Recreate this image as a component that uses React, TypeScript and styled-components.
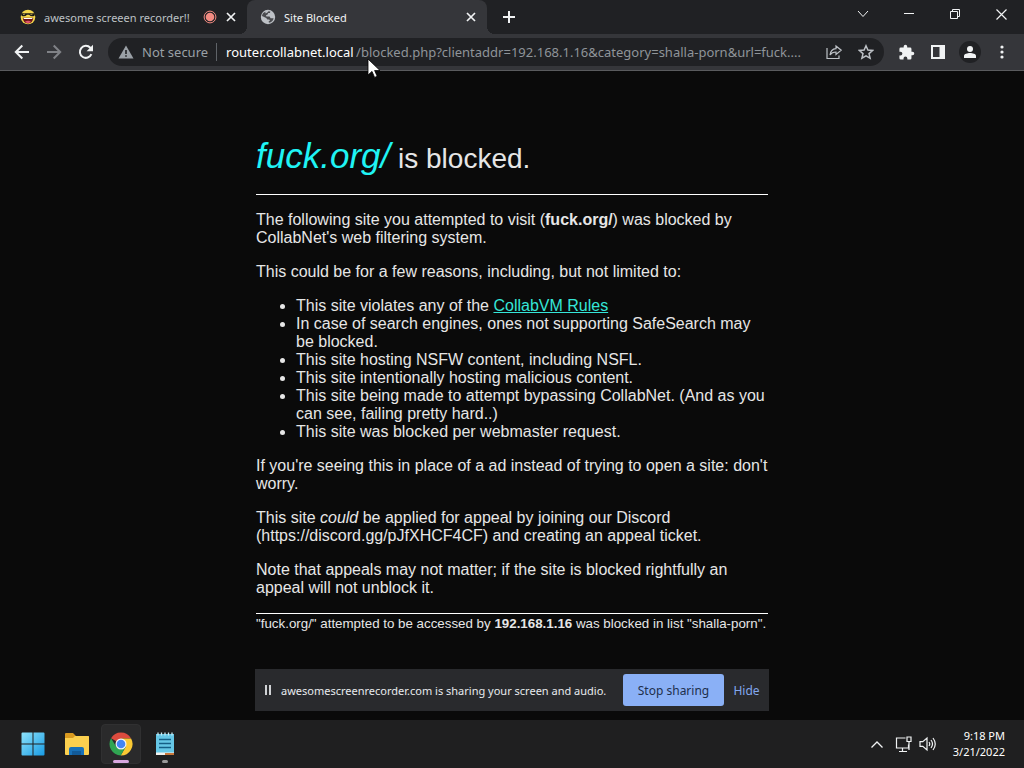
import React from "react";
import styled, { createGlobalStyle } from "styled-components";

const uiFont = `"Noto Sans", "Open Sans", sans-serif`;

const GlobalStyle = createGlobalStyle`
  *, *::before, *::after { box-sizing: border-box; }
  body { margin: 0; background: #0a0a0a; }
  button, input { font: inherit; color: inherit; }
  svg { display: block; flex: none; }
`;

const Desktop = styled.div`
  position: relative;
  display: flex;
  flex-direction: column;
  min-height: 100vh;
  font-family: ${uiFont};
  font-size: 12px;
  color: #e8eaed;
`;

/* Browser frame */
const TabStrip = styled.header`
  display: flex;
  height: 34px;
  background: #202124;
`;

const TabList = styled.div`
  display: flex;
  padding-left: 7px;
`;

const Tab = styled.div<{ $active?: boolean }>`
  position: relative;
  display: flex;
  align-items: center;
  gap: 6px;
  width: 240px;
  padding: 0 8px 0 13px;
  border-radius: 8px 8px 0 0;
  background: ${(p) => (p.$active ? "#35363a" : "transparent")};
  color: ${(p) => (p.$active ? "#f1f3f4" : "#bdc1c6")};

  &::before,
  &::after {
    content: ${(p) => (p.$active ? '""' : "none")};
    position: absolute;
    bottom: 0;
    width: 8px;
    height: 8px;
  }
  &::before {
    right: 100%;
    background: radial-gradient(circle at 0 0, transparent 8px, #35363a 8px);
  }
  &::after {
    left: 100%;
    background: radial-gradient(circle at 100% 0, transparent 8px, #35363a 8px);
  }
`;

const TabButton = styled.button`
  display: flex;
  flex: 1;
  align-items: center;
  gap: 8px;
  min-width: 0;
  height: 34px;
  padding: 0;
  border: 0;
  background: none;
  text-align: left;
  white-space: nowrap;
`;

const TabTitle = styled.span`
  flex: 1;
  overflow: hidden;
`;

const LongTabTitle = styled(TabTitle)`
  font-size: 11px;
`;

const IconButton = styled.button<{ $w?: number; $color?: string }>`
  display: flex;
  flex: none;
  align-items: center;
  justify-content: center;
  width: ${(p) => p.$w ?? 32}px;
  height: 28px;
  padding: 0;
  border: 0;
  background: none;
  color: ${(p) => p.$color ?? "#f1f3f4"};
`;

const NewTab = styled(IconButton)`
  margin: 3px 0 0 6px;
`;

const WindowControls = styled.div`
  display: flex;
  margin-left: auto;
`;

const Toolbar = styled.nav`
  display: flex;
  align-items: center;
  height: 37px;
  padding: 0 6px;
  background: #35363a;
  border-bottom: 1px solid #5a5b5e;
`;

const AddressBar = styled.form`
  display: flex;
  flex: 1;
  align-items: center;
  min-width: 0;
  height: 28px;
  margin: 0 6px;
  padding: 0 2px 0 10px;
  border-radius: 14px;
  background: #202124;
  font-size: 13px;
`;

const Security = styled.button`
  display: flex;
  align-items: center;
  gap: 8px;
  height: 18px;
  padding: 0 8px 0 0;
  border: 0;
  border-right: 1px solid #5f6368;
  background: none;
  color: #9aa0a6;
  white-space: nowrap;
`;

const UrlInput = styled.input<{ $host?: boolean }>`
  flex: ${(p) => (p.$host ? "0 0 130px" : "1")};
  min-width: 0;
  width: 130px;
  height: 24px;
  margin-left: ${(p) => (p.$host ? 9 : 0)}px;
  padding: 0;
  border: 0;
  outline: 0;
  background: none;
  color: ${(p) => (p.$host ? "#ffffff" : "#8f9499")};
`;

const Avatar = styled.span`
  display: flex;
  align-items: center;
  justify-content: center;
  width: 22px;
  height: 22px;
  border-radius: 50%;
  background: #202124;
`;

/* Blocked page */
const Page = styled.main`
  flex: 1;
  width: 50%;
  margin: 0 auto;
  padding: 64px 0 80px;
  font-family: "Liberation Sans", Arial, sans-serif;
  font-size: 16px;
  line-height: 18px;
  color: #e6e6e6;
`;

const Title = styled.h1`
  margin: 0 0 15px;
  font-size: 28px;
  font-weight: 400;
  line-height: 41px;
`;

const BlockedSite = styled.em`
  font-size: 35px;
  color: #1ff4f4;
`;

const Rule = styled.hr`
  height: 1px;
  margin: 0;
  border: 0;
  background: #ffffff;
`;

const Paragraph = styled.p`
  margin: 16px 0;
`;

const Reasons = styled.ul`
  margin: 16px 0;
  padding-left: 40px;
`;

const RulesLink = styled.a`
  color: #35e6d8;
`;

const Footnote = styled.small`
  display: block;
  padding-top: 1px;
  font-size: smaller;
  white-space: nowrap;
`;

/* Screen sharing notice floats over the page */
const ShareBar = styled.aside`
  position: absolute;
  bottom: 57px;
  left: 50%;
  display: flex;
  align-items: center;
  width: 514px;
  height: 42px;
  padding: 0 0 0 9px;
  transform: translateX(-50%);
  background: #292a2d;
  white-space: nowrap;
`;

const ShareText = styled.span`
  flex: 1;
  margin-left: 8px;
  font-size: 11px;
`;

const StopButton = styled.button`
  flex: none;
  width: 101px;
  height: 32px;
  padding: 0;
  border: 0;
  border-radius: 3px;
  background: #8ab0f6;
  color: #202f4c;
`;

const HideButton = styled.button`
  flex: none;
  width: 45px;
  height: 32px;
  padding: 0;
  border: 0;
  background: none;
  color: #82a8ee;
`;

/* Taskbar */
const Taskbar = styled.footer`
  display: flex;
  align-items: center;
  height: 48px;
  padding: 0 19px 0 13px;
  background: #1f1f20;
`;

const TaskButton = styled.button<{ $active?: boolean }>`
  position: relative;
  display: flex;
  align-items: center;
  justify-content: center;
  width: 40px;
  height: 40px;
  margin-right: 4px;
  padding: 0;
  border: 1px solid ${(p) => (p.$active ? "#303031" : "transparent")};
  border-radius: 4px;
  background: ${(p) => (p.$active ? "#2a2a2b" : "none")};
`;

const Indicator = styled.span<{ $active?: boolean }>`
  position: absolute;
  bottom: 0;
  left: 50%;
  width: ${(p) => (p.$active ? 16 : 6)}px;
  height: 3px;
  border-radius: 2px;
  transform: translateX(-50%);
  background: ${(p) => (p.$active ? "#d9a8e0" : "#9a9a9a")};
`;

const Tray = styled.div`
  display: flex;
  align-items: center;
  margin-left: auto;
`;

const Clock = styled.time`
  width: 66px;
  font-size: 11px;
  line-height: 16px;
  text-align: right;
  color: #ffffff;
`;

const Pointer = styled.svg`
  position: absolute;
  top: 58px;
  left: 367px;
`;

const CloseIcon = () => (
  <svg width="10" height="10" viewBox="0 0 10 10" stroke="currentColor" strokeWidth="1.7">
    <path d="M1 1l8 8M9 1L1 9" />
  </svg>
);

const FaceIcon = () => (
  <svg width="16" height="16" viewBox="0 0 16 16">
    <circle cx="8" cy="8" r="7.3" fill="#f3d64c" />
    <path d="M.8 4.2h14.4l-.7 2.600q-3.3 1.500-5.4-1H7Q4.8 8.200 1.500 6.800z" fill="#1c1a18" />
    <path d="M3 5.500l2-.4M10.500 5.500l2-.4" stroke="#d8c25a" strokeWidth=".8" />
    <path d="M2.700 8.800h10.600q-.6 5.700-5.300 5.700T2.700 8.800z" fill="#6c1518" />
    <path d="M3.500 8.900h9l-.3 1H3.800z" fill="#fff" />
    <path d="M5 12.600q3-1.800 6 0-1.300 1.600-3 1.600t-3-1.600z" fill="#e0526b" />
  </svg>
);

const RecordingIcon = () => (
  <svg width="14" height="14" viewBox="0 0 14 14">
    <circle cx="7" cy="7" r="4.300" fill="#f28b82" />
    <circle cx="7" cy="7" r="5.900" fill="none" stroke="#f28b82" />
  </svg>
);

const GlobeIcon = () => (
  <svg width="16" height="16" viewBox="0 0 16 16">
    <circle cx="8" cy="8" r="7.200" fill="#bdc1c6" />
    <path d="M8.500 2.200L10.300 2.600 10 4H8.200L7.600 5.600 6 6.200 6.400 7.600H9.600L10.600 9.200H13.600C13.200 11.500 11.500 13.400 9 13.800L8.600 12.600 10 11.400 9.200 10.400H7.400L6.200 9 2 7C2.300 5 3.500 3.300 5.300 2.700L5.600 4.400 7.400 3.600z" fill="#4a4b4f" />
  </svg>
);

const BackIcon = () => (
  <svg width="16" height="16" viewBox="0 0 16 16" fill="none" stroke="currentColor" strokeWidth="2">
    <path d="M15 8H2M8.300 1.500L1.800 8l6.500 6.500" />
  </svg>
);

const ForwardIcon = () => (
  <svg width="16" height="16" viewBox="0 0 16 16" fill="none" stroke="currentColor" strokeWidth="2">
    <path d="M1 8h13M7.700 1.500L14.200 8l-6.500 6.500" />
  </svg>
);

const ReloadIcon = () => (
  <svg width="16" height="16" viewBox="0 0 16 16">
    <path d="M13.400 10.200A6 6 0 1 1 12.300 3.800L14 5.500" fill="none" stroke="currentColor" strokeWidth="2" />
    <path d="M15 .8v6.400H8.600z" fill="currentColor" />
  </svg>
);

const WarningIcon = () => (
  <svg width="16" height="16" viewBox="0 0 16 16">
    <path d="M8 1.500L15.500 14.500H.5z" fill="currentColor" />
    <path d="M7.200 6h1.600v4H7.200zM7.200 11.200h1.600v1.600H7.200z" fill="#202124" />
  </svg>
);

const ShareIcon = () => (
  <svg width="16" height="16" viewBox="0 0 16 16" fill="none" stroke="currentColor" strokeWidth="1.200">
    <path d="M1 4v10.500h12V11.500" />
    <path d="M10 2l5.200 4.200L10 10.400V8C7.300 8 5.300 9 4 11 4.400 7.500 6.500 4.900 10 4.600z" />
  </svg>
);

const StarIcon = () => (
  <svg width="16" height="16" viewBox="0 0 16 16" fill="none" stroke="currentColor" strokeWidth="1.500">
    <path d="M8 1.800l1.900 4.300 4.700.4-3.600 3.100 1.100 4.600L8 11.800l-4.100 2.400L5 9.600 1.400 6.500l4.700-.4z" />
  </svg>
);

const PuzzleIcon = () => (
  <svg width="17" height="17" viewBox="0 0 24 24" fill="currentColor">
    <path d="M20.500 11H19V7a2 2 0 0 0-2-2h-4V3.500a2.500 2.500 0 0 0-5 0V5H4a2 2 0 0 0-2 2v3.800h1.500a2.700 2.700 0 0 1 0 5.400H2V20a2 2 0 0 0 2 2h3.800v-1.500a2.700 2.700 0 0 1 5.400 0V22H17a2 2 0 0 0 2-2v-4h1.500a2.500 2.500 0 0 0 0-5z" />
  </svg>
);

const PanelIcon = () => (
  <svg width="14" height="14" viewBox="0 0 14 14">
    <path d="M1 1h12v12H1z" fill="none" stroke="currentColor" strokeWidth="2" />
    <path d="M8.500 0H14v14H8.500z" fill="currentColor" />
  </svg>
);

const PersonIcon = () => (
  <svg width="12" height="12" viewBox="0 0 12 12" fill="currentColor">
    <circle cx="6" cy="3" r="3" />
    <path d="M0 12V9.800C0 7.900 3.500 7 6 7s6 .9 6 2.800V12z" />
  </svg>
);

const DotsIcon = () => (
  <svg width="4" height="14" viewBox="0 0 4 14" fill="currentColor">
    <circle cx="2" cy="2" r="1.600" />
    <circle cx="2" cy="7" r="1.600" />
    <circle cx="2" cy="12" r="1.600" />
  </svg>
);

const WindowsIcon = () => (
  <svg width="24" height="24" viewBox="0 0 24 24">
    <defs>
      <linearGradient id="win" x1="0" y1="0" x2="1" y2="1">
        <stop offset="0" stopColor="#8ee3fb" />
        <stop offset="1" stopColor="#189be4" />
      </linearGradient>
    </defs>
    <path d="M1.500.5h10v11H.5v-10a1 1 0 0 1 1-1zM12.500.5h10a1 1 0 0 1 1 1v10h-11zM.5 12.500h11v11h-10a1 1 0 0 1-1-1zM12.500 12.500h11v10a1 1 0 0 1-1 1h-10z" fill="url(#win)" />
  </svg>
);

const FolderIcon = () => (
  <svg width="26" height="24" viewBox="0 0 26 24">
    <path d="M1 2q0-1 1-1h7l3 3h12q1 0 1 1v6H1z" fill="#d99a20" />
    <path d="M1 6h8l2-2h13q1 0 1 1v17q0 1-1 1H2q-1 0-1-1z" fill="#fbd04f" />
    <path d="M5 23v-6q0-2 2-2h11q2 0 2 2v6z" fill="#1871b8" />
    <path d="M8 19h9v4H8z" fill="#125a98" />
  </svg>
);

const ChromeIcon = () => (
  <svg width="24" height="24" viewBox="0 0 24 24">
    <path d="M12 12L2.040 6.250A11.500 11.500 0 0 1 21.960 6.250L12 6.500z" fill="#dc4b3e" />
    <path d="M12 6.500h10.100A11.500 11.500 0 0 1 11.700 23.500L16.760 14.750z" fill="#fbc933" />
    <path d="M2.040 6.250L7.240 14.750 12 17.500l4.760-2.750L11.700 23.500A11.500 11.500 0 0 1 2.040 6.250z" fill="#30a552" />
    <circle cx="12" cy="12" r="5.500" fill="#f4f5f6" />
    <circle cx="12" cy="12" r="4.300" fill="#4285f4" />
  </svg>
);

const NotepadIcon = () => (
  <svg width="20" height="24" viewBox="0 0 20 24">
    <path d="M1 2h18v19H1z" fill="#66c7e6" />
    <path d="M1 20.500h18v2.500H1z" fill="#f2f2ee" />
    <path d="M10 21h9v2h-9z" fill="#c9763a" />
    <path d="M3 .5v3M6.500.5v3M10 .5v3M13.500.5v3M17 .5v3" stroke="#c9edf6" strokeWidth="1.300" />
    <path d="M4 7.500h12M4 11.500h12M4 15.500h12" stroke="#155f86" strokeWidth="1.700" />
  </svg>
);

const NetworkIcon = () => (
  <svg width="17" height="17" viewBox="0 0 17 17" fill="none" stroke="currentColor" strokeWidth="1.200">
    <path d="M10.500 2H1.500v10h12V8.500M7.500 12v3.500M4 15.500h8M12 1h4v4.500h-4zM14 5.500V14" />
  </svg>
);

const VolumeIcon = () => (
  <svg width="17" height="16" viewBox="0 0 17 16" fill="none" stroke="currentColor" strokeWidth="1.200">
    <path d="M1 5.700h2.800L8 2v12l-4.200-3.700H1zM10 6q1.500 2 0 4M12 4q3 4 0 8M14 2q4.500 6 0 12" />
  </svg>
);

const reasons: React.ReactNode[] = [
  <>This site violates any of the <RulesLink href="#rules">CollabVM Rules</RulesLink></>,
  "In case of search engines, ones not supporting SafeSearch may be blocked.",
  "This site hosting NSFW content, including NSFL.",
  "This site intentionally hosting malicious content.",
  "This site being made to attempt bypassing CollabNet. (And as you can see, failing pretty hard..)",
  "This site was blocked per webmaster request.",
];

export default function App() {
  return (
    <Desktop>
      <GlobalStyle />
      <TabStrip>
        <TabList role="tablist">
          <Tab>
            <TabButton role="tab" aria-selected={false}>
              <FaceIcon />
              <LongTabTitle>awesome screeen recorder!!</LongTabTitle>
              <RecordingIcon />
            </TabButton>
            <IconButton $w={16} aria-label="Close tab"><CloseIcon /></IconButton>
          </Tab>
          <Tab $active>
            <TabButton role="tab" aria-selected>
              <GlobeIcon />
              <LongTabTitle>Site Blocked</LongTabTitle>
            </TabButton>
            <IconButton $w={16} aria-label="Close tab"><CloseIcon /></IconButton>
          </Tab>
        </TabList>
        <NewTab aria-label="New tab">
          <svg width="12" height="12" viewBox="0 0 12 12" stroke="currentColor" strokeWidth="2"><path d="M6 0v12M0 6h12" /></svg>
        </NewTab>
        <WindowControls>
          <IconButton $w={46} aria-label="Search tabs">
            <svg width="12" height="8" viewBox="0 0 12 8" fill="none" stroke="currentColor"><path d="M1 1l5 5.500L11 1" /></svg>
          </IconButton>
          <IconButton $w={46} aria-label="Minimize">
            <svg width="10" height="2" viewBox="0 0 10 2"><path d="M0 0h10v1H0z" fill="currentColor" /></svg>
          </IconButton>
          <IconButton $w={46} aria-label="Restore">
            <svg width="10" height="10" viewBox="0 0 10 10" fill="none" stroke="currentColor"><path d="M.5 2.500h7v7h-7zM2.500 2.500v-2h7v7h-2" /></svg>
          </IconButton>
          <IconButton $w={46} aria-label="Close">
            <svg width="11" height="11" viewBox="0 0 11 11" stroke="currentColor" strokeWidth="1.200"><path d="M.5.5l10 10M10.500.5l-10 10" /></svg>
          </IconButton>
        </WindowControls>
      </TabStrip>
      <Toolbar>
        <IconButton aria-label="Back"><BackIcon /></IconButton>
        <IconButton aria-label="Forward" $color="#808287"><ForwardIcon /></IconButton>
        <IconButton aria-label="Reload"><ReloadIcon /></IconButton>
        <AddressBar onSubmit={(e) => e.preventDefault()}>
          <Security type="button"><WarningIcon />Not secure</Security>
          <UrlInput $host aria-label="Address host" defaultValue="router.collabnet.local" />
          <UrlInput aria-label="Address path" defaultValue="/blocked.php?clientaddr=192.168.1.16&category=shalla-porn&url=fuck...." />
          <IconButton type="button" aria-label="Share" $color="#bdc1c6"><ShareIcon /></IconButton>
          <IconButton type="button" aria-label="Bookmark" $color="#bdc1c6"><StarIcon /></IconButton>
        </AddressBar>
        <IconButton aria-label="Extensions"><PuzzleIcon /></IconButton>
        <IconButton aria-label="Side panel"><PanelIcon /></IconButton>
        <IconButton aria-label="Profile"><Avatar><PersonIcon /></Avatar></IconButton>
        <IconButton aria-label="Menu"><DotsIcon /></IconButton>
      </Toolbar>
      <Page>
        <Title><BlockedSite>fuck.org/</BlockedSite> is blocked.</Title>
        <Rule />
        <Paragraph>
          The following site you attempted to visit (<b>fuck.org/</b>) was blocked by CollabNet's web filtering system.
        </Paragraph>
        <Paragraph>This could be for a few reasons, including, but not limited to:</Paragraph>
        <Reasons>
          {reasons.map((reason, i) => <li key={i}>{reason}</li>)}
        </Reasons>
        <Paragraph>If you're seeing this in place of a ad instead of trying to open a site: don't worry.</Paragraph>
        <Paragraph>
          This site <i>could</i> be applied for appeal by joining our Discord (https://discord.gg/pJfXHCF4CF) and creating an appeal ticket.
        </Paragraph>
        <Paragraph>Note that appeals may not matter; if the site is blocked rightfully an appeal will not unblock it.</Paragraph>
        <Rule />
        <Footnote>"fuck.org/" attempted to be accessed by <b>192.168.1.16</b> was blocked in list "shalla-porn".</Footnote>
      </Page>
      <ShareBar>
        <svg width="9" height="12" viewBox="0 0 9 12" fill="#d0d2d5"><path d="M1 1h2v10H1zM5 1h2v10H5z" /></svg>
        <ShareText>awesomescreenrecorder.com is sharing your screen and audio.</ShareText>
        <StopButton>Stop sharing</StopButton>
        <HideButton>Hide</HideButton>
      </ShareBar>
      <Taskbar>
        <TaskButton aria-label="Start"><WindowsIcon /></TaskButton>
        <TaskButton aria-label="File Explorer"><FolderIcon /></TaskButton>
        <TaskButton $active aria-label="Chrome"><ChromeIcon /><Indicator $active /></TaskButton>
        <TaskButton aria-label="Notepad"><NotepadIcon /><Indicator /></TaskButton>
        <Tray>
          <IconButton $w={28} aria-label="Show hidden icons">
            <svg width="12" height="7" viewBox="0 0 12 7" fill="none" stroke="currentColor" strokeWidth="1.300"><path d="M.5 6.500L6 1l5.500 5.500" /></svg>
          </IconButton>
          <IconButton $w={24} aria-label="Network"><NetworkIcon /></IconButton>
          <IconButton $w={24} aria-label="Volume"><VolumeIcon /></IconButton>
          <Clock>9:18 PM<br />3/21/2022</Clock>
        </Tray>
      </Taskbar>
      <Pointer width="14" height="20" viewBox="0 0 14 20" aria-hidden="true">
        <path d="M1 1v16l4-3.600 2.600 6 2.600-1.100-2.600-5.800H13z" fill="#fff" stroke="#000" strokeWidth=".8" />
      </Pointer>
    </Desktop>
  );
}
